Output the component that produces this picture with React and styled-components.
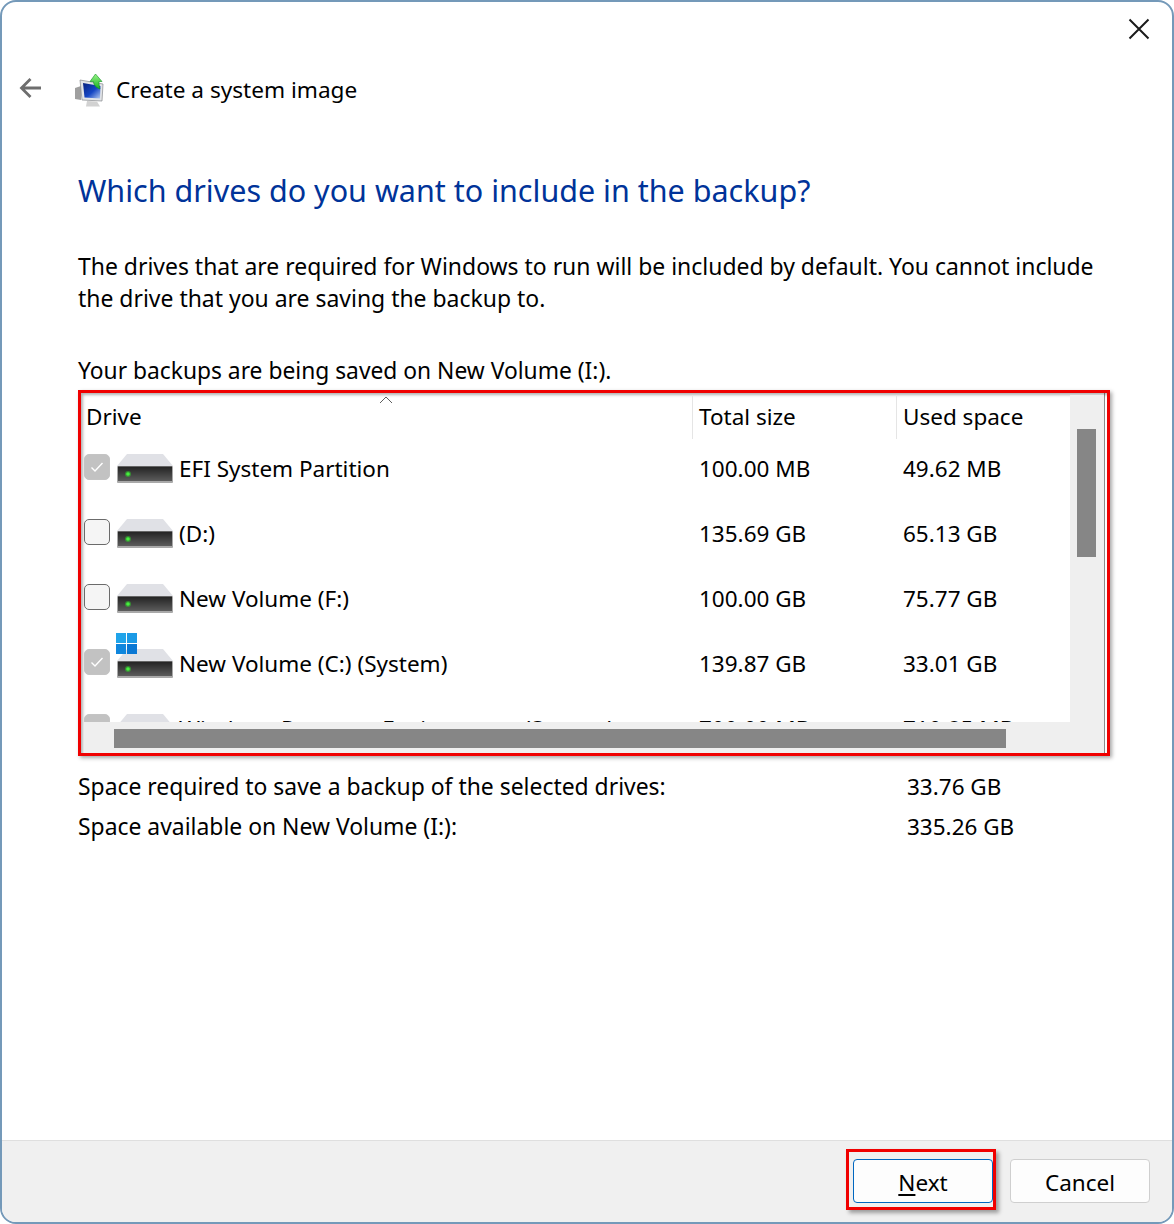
import styled, { createGlobalStyle } from "styled-components";

const GlobalStyle = createGlobalStyle`
  html, body { margin: 0; padding: 0; background: #fff; }
  * { box-sizing: border-box; }
  body { font-family: "Noto Sans", "Open Sans", sans-serif; color: #000; }
`;

const drives = [
  { id: "efi", label: "EFI System Partition", total: "100.00 MB", used: "49.62 MB", locked: true },
  { id: "d", label: "(D:)", total: "135.69 GB", used: "65.13 GB" },
  { id: "f", label: "New Volume (F:)", total: "100.00 GB", used: "75.77 GB" },
  { id: "c", label: "New Volume (C:) (System)", total: "139.87 GB", used: "33.01 GB", locked: true, system: true },
  { id: "re", label: "Windows Recovery Environment (System)", total: "700.00 MB", used: "710.85 MB", locked: true },
];

const CloseIcon = () => (
  <svg width="22" height="22" viewBox="0 0 22 22">
    <path d="M1.5 1.5 L20.5 20.5 M20.5 1.5 L1.5 20.5" stroke="#1a1a1a" strokeWidth="2" fill="none" />
  </svg>
);

const BackIcon = () => (
  <svg width="24" height="22" viewBox="0 0 24 22">
    <path d="M22 11 H2.5 M11.5 2 L2.5 11 L11.5 20" stroke="#6e6e6e" strokeWidth="2.8" fill="none" />
  </svg>
);

const BackupIcon = () => (
  <svg width="30" height="33" viewBox="0 0 30 33">
    <defs>
      <linearGradient id="screen" x1="0" y1="0" x2="1" y2="1">
        <stop offset="0" stopColor="#06207f" />
        <stop offset="0.55" stopColor="#1546c4" />
        <stop offset="1" stopColor="#b6cbf0" />
      </linearGradient>
      <linearGradient id="arrow" x1="0" y1="0" x2="0" y2="1">
        <stop offset="0" stopColor="#9af588" />
        <stop offset="1" stopColor="#14b01e" />
      </linearGradient>
    </defs>
    <path d="M0 14 L6 12 V26 L0 25 Z" fill="#9f9f9f" />
    <path d="M5 6 L28 10 L27 27 L7 26 Z" fill="#e2e4e7" stroke="#85888c" strokeWidth="0.7" />
    <path d="M8 9 L25.5 12 L25 24.5 L9.5 23.5 Z" fill="url(#screen)" />
    <path d="M12 27 L22 27.5 L25 32.5 H11 Z" fill="#d2d2d2" />
    <path d="M20.5 0 L27 7.5 H24 C24 11 24.5 13 25 15 C21 13.5 18.5 11 18.5 7.5 H15 Z" fill="url(#arrow)" stroke="#0f8f22" strokeWidth="0.6" />
  </svg>
);

const DriveIcon = () => (
  <svg width="56" height="29" viewBox="0 0 56 29">
    <defs>
      <linearGradient id="body" x1="0" y1="0" x2="0" y2="1">
        <stop offset="0" stopColor="#222" />
        <stop offset="1" stopColor="#5c5c5c" />
      </linearGradient>
    </defs>
    <path d="M10 0 H46 L56 12 H0 Z" fill="#e0e1e6" />
    <rect x="0" y="12" width="56" height="17" rx="1" fill="#a9a9a9" />
    <rect x="1" y="12.5" width="54" height="14.5" fill="url(#body)" />
    <circle cx="11" cy="20" r="3" fill="#2fd42a" opacity="0.5" />
    <circle cx="11" cy="20" r="1.8" fill="#46f03e" />
  </svg>
);

const WindowsBadge = () => (
  <svg width="21" height="21" viewBox="0 0 21 21">
    <rect width="10" height="10" fill="#1fa4ea" />
    <rect x="11" width="10" height="10" fill="#1b9ae6" />
    <rect y="11" width="10" height="10" fill="#0f86dd" />
    <rect x="11" y="11" width="10" height="10" fill="#0a78d4" />
  </svg>
);

export default function App() {
  return (
    <>
      <GlobalStyle />
      <Frame>
        <TitleBar>
          <CloseButton>
            <CloseIcon />
          </CloseButton>
        </TitleBar>
        <NavBar>
          <BackButton>
            <BackIcon />
          </BackButton>
          <BackupIcon />
          <NavTitle>Create a system image</NavTitle>
        </NavBar>

        <Content>
          <Heading>Which drives do you want to include in the backup?</Heading>
          <Intro>
            The drives that are required for Windows to run will be included by default. You cannot include
            <br />
            the drive that you are saving the backup to.
          </Intro>
          <SaveNote>Your backups are being saved on New Volume (I:).</SaveNote>

          <ListFrame>
            <ListMain>
              <HeaderRow>
                <HeaderCell $first>
                  Drive
                  <SortCaret viewBox="0 0 14 8">
                    <path d="M1 7 L7 1 L13 7" stroke="#5f5f5f" strokeWidth="1" fill="none" />
                  </SortCaret>
                </HeaderCell>
                <HeaderCell>Total size</HeaderCell>
                <HeaderCell>Used space</HeaderCell>
              </HeaderRow>
              {drives.map((d) => (
                <DriveRow key={d.id}>
                  <NameCell>
                    <CheckBox $locked={d.locked}>
                      {d.locked && (
                        <svg width="14" height="12" viewBox="0 0 14 12">
                          <path d="M1.5 6.5 L5 10 L12.5 2" stroke="#fff" strokeWidth="1.4" fill="none" />
                        </svg>
                      )}
                    </CheckBox>
                    <IconWrap>
                      <DriveIcon />
                      {d.system && (
                        <BadgeSpot>
                          <WindowsBadge />
                        </BadgeSpot>
                      )}
                    </IconWrap>
                    <span>{d.label}</span>
                  </NameCell>
                  <ValueCell>{d.total}</ValueCell>
                  <ValueCell>{d.used}</ValueCell>
                </DriveRow>
              ))}
            </ListMain>
            <VScroll>
              <VThumb />
            </VScroll>
            <HScroll>
              <HThumb />
            </HScroll>
            <ScrollCorner />
          </ListFrame>

          <Summary>
            <SummaryRow>
              <span>Space required to save a backup of the selected drives:</span>
              <SummaryValue>33.76 GB</SummaryValue>
            </SummaryRow>
            <SummaryRow>
              <span>Space available on New Volume (I:):</span>
              <SummaryValue>335.26 GB</SummaryValue>
            </SummaryRow>
          </Summary>
        </Content>

        <Footer>
          <Highlight>
            <DialogButton $primary>
              <u>N</u>ext
            </DialogButton>
          </Highlight>
          <DialogButton>Cancel</DialogButton>
        </Footer>
      </Frame>
    </>
  );
}

const textSize = "22.9px";
const tableSize = "22.5px";

const Frame = styled.div`
  width: 1174px;
  height: 1224px;
  display: flex;
  flex-direction: column;
  background: #fff;
  border: 2px solid #7499b9;
  border-radius: 16px;
  overflow: hidden;
`;

const TitleBar = styled.div`
  height: 70px;
  display: flex;
  justify-content: flex-end;
  padding: 16px 22px 0 0;
`;

const CloseButton = styled.div`
  width: 22px;
  height: 22px;
`;

const NavBar = styled.div`
  height: 36px;
  display: flex;
  align-items: center;
  padding-left: 17px;
`;

const BackButton = styled.div`
  width: 56px;
  height: 22px;
  margin-top: -4px;
`;

const NavTitle = styled.div`
  font-size: 22.6px;
  line-height: 32px;
  margin-left: 11px;
`;

const Content = styled.div`
  flex: 1;
  padding: 0 62px 0 76px;
`;

const Heading = styled.h1`
  margin: 63px 0 0;
  font-size: 30.5px;
  line-height: 38px;
  font-weight: 400;
  color: #003399;
  white-space: nowrap;
`;

const Intro = styled.p`
  margin: 41px 0 0;
  font-size: 22.95px;
  line-height: 32px;
  white-space: nowrap;
`;

const SaveNote = styled.p`
  margin: 41px 0 0;
  font-size: 22.8px;
  line-height: 32px;
`;

const ListFrame = styled.div`
  width: 1032px;
  height: 366px;
  margin-top: 3px;
  display: grid;
  grid-template-columns: 1fr 34px;
  grid-template-rows: 1fr 31px;
  border: 3px solid #f00000;
  box-shadow: 2px 2px 4px rgba(0, 0, 0, 0.35), inset 2px 2px 3px rgba(0, 0, 0, 0.3), inset -2px 0 0 #fff, inset -3px 0 0 #8a8a8a;
  padding: 2px 3px 0 3px;
  background: #fff;
`;

const ListMain = styled.div`
  overflow: hidden;
  font-size: ${tableSize};
  min-width: 0;
`;

const HeaderRow = styled.div`
  height: 41px;
  display: grid;
  grid-template-columns: 608px 204px 1fr;
`;

const HeaderCell = styled.div`
  position: relative;
  line-height: 44px;
  padding-left: ${({ $first }) => ($first ? "2px" : "6px")};
  border-left: ${({ $first }) => ($first ? "none" : "1px solid #e5e5e5")};
`;

const SortCaret = styled.svg`
  position: absolute;
  top: 1px;
  left: 295px;
  width: 14px;
  height: 8px;
`;

const DriveRow = styled.div`
  height: 65px;
  display: grid;
  grid-template-columns: 608px 204px 1fr;
  align-items: center;
`;

const NameCell = styled.div`
  display: flex;
  align-items: center;
  white-space: nowrap;
`;

const CheckBox = styled.div`
  width: 26px;
  height: 26px;
  margin: -4px 0 0 0;
  border-radius: 5px;
  display: flex;
  align-items: center;
  justify-content: center;
  background: ${({ $locked }) => ($locked ? "#c2c2c2" : "#f5f5f5")};
  border: ${({ $locked }) => ($locked ? "1px solid #c4c4c4" : "1.5px solid #6b6b6b")};
`;

const IconWrap = styled.div`
  position: relative;
  width: 56px;
  height: 29px;
  margin: 0 6px 0 7px;
`;

const BadgeSpot = styled.div`
  position: absolute;
  left: -1px;
  top: -19px;
`;

const ValueCell = styled.div`
  padding-left: 7px;
`;

const VScroll = styled.div`
  background: #efefef;
  padding: 34px 8px 0 7px;
`;

const VThumb = styled.div`
  height: 128px;
  background: #868686;
`;

const HScroll = styled.div`
  background: #efefef;
  padding: 7px 0 0 30px;
`;

const HThumb = styled.div`
  width: 892px;
  height: 19px;
  background: #868686;
`;

const ScrollCorner = styled.div`
  background: #efefef;
`;

const Summary = styled.div`
  margin-top: 11px;
  font-size: ${textSize};
`;

const SummaryRow = styled.div`
  display: grid;
  grid-template-columns: 829px 1fr;
  line-height: 40px;
`;

const SummaryValue = styled.span`
  font-size: 22.5px;
`;

const Footer = styled.div`
  height: 82px;
  display: flex;
  align-items: flex-start;
  justify-content: flex-end;
  gap: 14px;
  padding: 18px 22px 0 0;
  background: #f0f0f0;
  border-top: 1px solid #dfdfdf;
`;

const Highlight = styled.div`
  margin: -10px 0 0;
  padding: 7px 0 4px 4px;
  border: 3px solid #f00000;
  box-shadow: 3px 3px 4px rgba(0, 0, 0, 0.35);
  width: 150px;
  height: 61px;
`;

const DialogButton = styled.div`
  width: 140px;
  height: 44px;
  padding-top: 2px;
  display: flex;
  align-items: center;
  justify-content: center;
  font-size: ${tableSize};
  background: #fdfdfd;
  border-radius: 4px;
  border: 1px solid ${({ $primary }) => ($primary ? "#0067c0" : "#cfcfcf")};

  u {
    text-underline-offset: 3px;
  }
`;
